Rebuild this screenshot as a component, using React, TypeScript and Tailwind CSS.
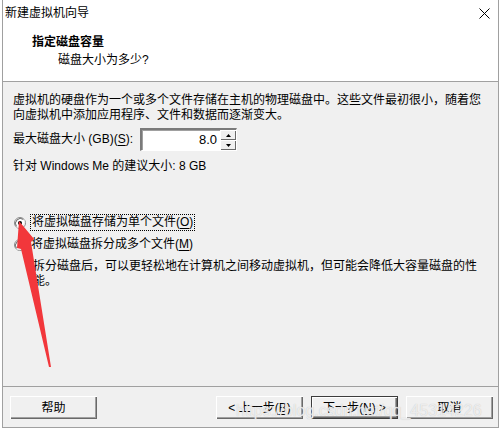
import React from "react";

const U = ({ c }: { c: string }) => <span className="underline underline-offset-2">{c}</span>;

function Radio({ checked }: { checked?: boolean }) {
  return (
    <svg width="12" height="12" viewBox="0 0 12 12" className="shrink-0">
      <circle cx="6" cy="6" r="5.5" fill="#ffffff" stroke="#8a8a8a" strokeWidth="1" />
      <path d="M9.5 2.5 A5 5 0 0 0 2.5 9.5" fill="none" stroke="#696969" strokeWidth="1" />
      <path d="M2.2 9.8 A5.5 5.5 0 0 0 9.8 2.2" fill="none" stroke="#e8e8e8" strokeWidth="1" />
      {checked && <circle cx="6" cy="6" r="2" fill="#000" />}
    </svg>
  );
}

function Btn({ children, def }: { children: React.ReactNode; def?: boolean }) {
  return (
    <div
      className={
        "w-[87px] h-[23px] flex items-center justify-center bg-[#f0f0f0] text-[12px] " +
        (def
          ? "border border-[#3c3c3c] shadow-[inset_1px_1px_0_#fff,inset_-1px_-1px_0_#696969,inset_-2px_-2px_0_#a0a0a0]"
          : "shadow-[inset_1px_1px_0_#fff,inset_-1px_-1px_0_#696969,inset_-2px_-2px_0_#a0a0a0]")
      }
    >
      {children}
    </div>
  );
}

export default function App() {
  return (
    <div
      className="relative w-[503px] h-[430px] bg-white overflow-hidden text-black text-[12px]"
      style={{ fontFamily: '"Liberation Sans", "Noto Sans CJK SC", sans-serif' }}
    >
      <div className="ml-[2px] w-[497px] h-[428px] flex flex-col border-l border-r border-b border-[#a0a0a0]">
        {/* top white area */}
        <div className="h-[81px] bg-white flex flex-col">
          <div className="h-[26px] flex items-center justify-between pl-[2px] pr-[8px]">
            <span className="leading-[16px]">新建虚拟机向导</span>
            <svg width="11" height="11" viewBox="0 0 11 11">
              <path d="M0.5 0.5 L10.5 10.5 M10.5 0.5 L0.5 10.5" stroke="#000" strokeWidth="1" />
            </svg>
          </div>
          <div className="mt-[8px] pl-[29px] font-bold leading-[16px]">指定磁盘容量</div>
          <div className="mt-[2px] pl-[55px] leading-[16px]">磁盘大小为多少?</div>
        </div>
        {/* body */}
        <div className="flex-1 bg-[#f0f0f0] border-t border-[#a0a0a0] flex flex-col">
          <div className="flex-1 flex flex-col pl-[10px] pt-[11px]">
            <div className="leading-[15px]">
              虚拟机的硬盘作为一个或多个文件存储在主机的物理磁盘中。这些文件最初很小，随着您
              <br />
              向虚拟机中添加应用程序、文件和数据而逐渐变大。
            </div>
            <div className="mt-[5px] flex items-center h-[23px]">
              <span className="w-[127px] leading-[15px]">
                最大磁盘大小 (GB)(<U c="S" />):
              </span>
              <div className="w-[97px] h-[23px] flex bg-white border-t-2 border-l-2 border-t-[#7a7a7a] border-l-[#7a7a7a] border-r border-b border-r-[#fff] border-b-[#fff] shadow-[inset_1px_1px_0_#a0a0a0]">
                <div className="flex-1 flex items-center justify-end pr-[3px] text-[13px]">8.0</div>
                <div className="w-[16px] flex flex-col">
                  <div className="flex-1 flex items-center justify-center bg-[#f0f0f0] shadow-[inset_1px_1px_0_#fff,inset_-1px_-1px_0_#696969]">
                    <svg width="5" height="3" viewBox="0 0 5 3">
                      <path d="M2.5 0 L5 3 L0 3 Z" fill="#000" />
                    </svg>
                  </div>
                  <div className="flex-1 flex items-center justify-center bg-[#f0f0f0] shadow-[inset_1px_1px_0_#fff,inset_-1px_-1px_0_#696969]">
                    <svg width="5" height="3" viewBox="0 0 5 3">
                      <path d="M0 0 L5 0 L2.5 3 Z" fill="#000" />
                    </svg>
                  </div>
                </div>
              </div>
            </div>
            <div className="mt-[8px] leading-[15px]">针对 Windows Me 的建议大小: 8 GB</div>
            <div className="mt-[40px] h-[17px] flex items-center">
              <div className="ml-[1px]">
                <Radio checked />
              </div>
              <span className="ml-[4px] h-[17px] px-[1px] flex items-center border border-dotted border-black leading-[15px]">
                将虚拟磁盘存储为单个文件(<U c="O" />)
              </span>
            </div>
            <div className="mt-[5px] h-[17px] flex items-center">
              <div className="ml-[1px]">
                <Radio />
              </div>
              <span className="ml-[5px] leading-[15px]">
                将虚拟磁盘拆分成多个文件(<U c="M" />)
              </span>
            </div>
            <div className="mt-[6px] ml-[20px] leading-[15px]">
              拆分磁盘后，可以更轻松地在计算机之间移动虚拟机，但可能会降低大容量磁盘的性
              <br />
              能。
            </div>
          </div>
          <div className="border-t border-[#a0a0a0] pt-[9px] pb-[8px] pl-[7px] pr-[5px] flex items-center">
            <Btn>帮助</Btn>
            <div className="flex-1" />
            <div className="flex gap-[8px]">
              <Btn>
                &lt; 上一步(<U c="B" />)
              </Btn>
              <Btn def>
                下一步(<U c="N" />) &gt;
              </Btn>
              <Btn>取消</Btn>
            </div>
          </div>
        </div>
      </div>

      {/* watermark */}
      <div
        className="absolute left-[236px] top-[402px] text-[16px] leading-[18px] text-white/70 pointer-events-none [text-shadow:0_0_1px_#bbb]"
        style={{ fontFamily: '"Liberation Sans", sans-serif' }}
      >
        https://blog.csdn.net/qq_45314226
      </div>

      {/* red arrow */}
      <svg className="absolute left-0 top-0 pointer-events-none" width="503" height="430" viewBox="0 0 503 430">
        <polygon
          points="19,221 34,239 31,242 51,367 49,367 21,249 17,248"
          fill="#f2373b"
        />
      </svg>
    </div>
  );
}
